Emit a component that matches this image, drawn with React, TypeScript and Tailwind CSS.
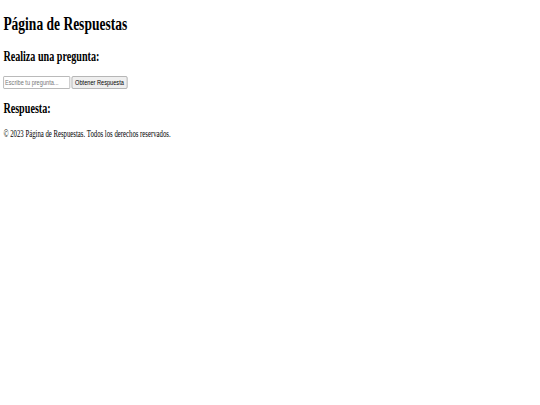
export default function App() {
  return (
    <div className="h-screen w-full overflow-hidden bg-white">
      <div
        className="flow-root w-[1280px] origin-top-left scale-x-[0.421875] scale-y-[0.6] px-2 leading-[normal] text-black"
        style={{ fontFamily: '"Liberation Serif", "Times New Roman", serif', fontSize: "16px" }}
      >
        <h1 className="my-[21.44px] text-[32px] font-bold leading-[normal]">Página de Respuestas</h1>
        <h2 className="my-[19.92px] text-[24px] font-bold leading-[normal]">Realiza una pregunta:</h2>
        <div>
          <input
            type="text"
            placeholder="Escribe tu pregunta..."
            className="w-[158px] rounded-[2px] border border-[#767676] bg-white px-[3px] py-[2px] text-[13.333px] leading-[normal] placeholder:text-[#757575]"
            style={{ fontFamily: '"Liberation Sans", Arial, sans-serif' }}
          />{" "}
          <button
            className="rounded-[3px] border border-[#767676] bg-[#efefef] px-[7px] py-[2px] text-[13.333px] leading-[normal]"
            style={{ fontFamily: '"Liberation Sans", Arial, sans-serif' }}
          >
            Obtener Respuesta
          </button>
        </div>
        <h2 className="my-[19.92px] text-[24px] font-bold leading-[normal]">Respuesta:</h2>
        <div></div>
        <footer>
          <p className="my-4">© 2023 Página de Respuestas. Todos los derechos reservados.</p>
        </footer>
      </div>
    </div>
  );
}
